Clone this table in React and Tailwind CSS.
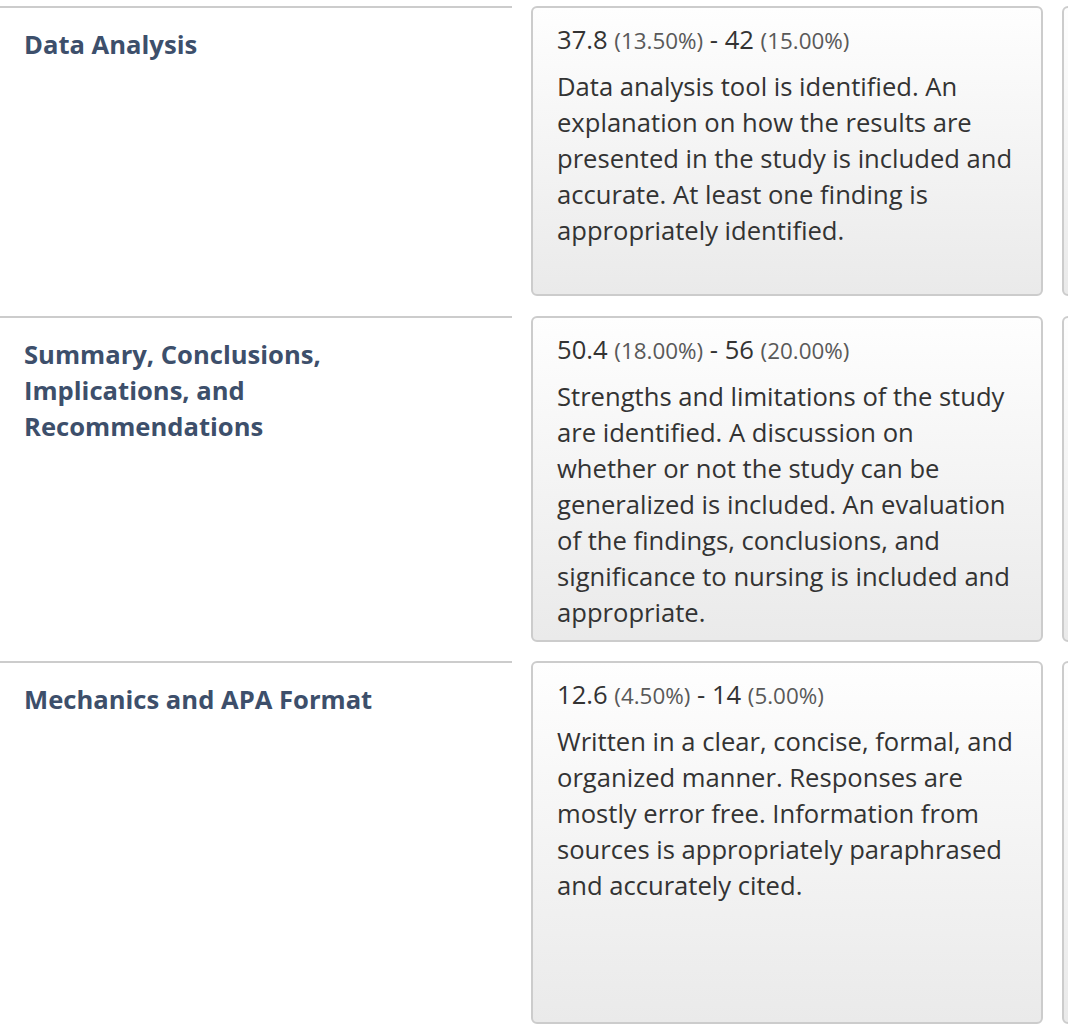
import React from 'react';

const rows = [
    {
        title: 'Data Analysis',
        min: '37.8', minPct: '13.50%', max: '42', maxPct: '15.00%',
        text: 'Data analysis tool is identified. An explanation on how the results are presented in the study is included and accurate. At least one finding is appropriately identified.',
        height: 'h-[290px]',
        gap: 'pb-[20px]',
    },
    {
        title: 'Summary, Conclusions, Implications, and Recommendations',
        min: '50.4', minPct: '18.00%', max: '56', maxPct: '20.00%',
        text: 'Strengths and limitations of the study are identified. A discussion on whether or not the study can be generalized is included. An evaluation of the findings, conclusions, and significance to nursing is included and appropriate.',
        height: 'h-[326px]',
        gap: 'pb-[19px]',
    },
    {
        title: 'Mechanics and APA Format',
        min: '12.6', minPct: '4.50%', max: '14', maxPct: '5.00%',
        text: 'Written in a clear, concise, formal, and organized manner. Responses are mostly error free. Information from sources is appropriately paraphrased and accurately cited.',
        height: 'h-[363px]',
        gap: 'pb-[8px]',
    },
];

function RatingCard({ row }) {
    return (
        <div className={`${row.height} w-[512px] shrink-0 rounded-[6px] border-2 border-[#cccccc] bg-gradient-to-b from-[#fefefe] to-[#eaeaea] pl-[24px] pr-[24px] pt-[16px]`}>
            <p className="text-[25.6px] leading-[32px] text-[#333333]">
                {row.min} <span className="text-[22.4px] text-[#595959]">({row.minPct})</span> - {row.max}{' '}
                <span className="text-[22.4px] text-[#595959]">({row.maxPct})</span>
            </p>
            <p className="mt-[12px] text-[25.6px] leading-[36px] text-[#333333]">{row.text}</p>
        </div>
    );
}

export default function App() {
    return (
        <div className="min-h-screen bg-white pt-[6px] font-['Open_Sans',sans-serif] overflow-hidden">
            {rows.map((row, idx) => (
                <div key={idx} className={`flex ${row.gap}`}>
                    {/* Criterion */}
                    <div className="w-[512px] shrink-0 border-t-2 border-[#cccccc] px-[24px] pt-[19px]">
                        <h3 className="max-w-[400px] text-[25.6px] font-bold leading-[36px] text-[#3d4f6b]">{row.title}</h3>
                    </div>
                    {/* Ratings */}
                    <div className="flex gap-[19px] pl-[19px]">
                        <RatingCard row={row} />
                        <div className={`${row.height} w-[512px] shrink-0 rounded-[6px] border-2 border-[#cccccc] bg-gradient-to-b from-[#fefefe] to-[#eaeaea]`} />
                    </div>
                </div>
            ))}
        </div>
    );
}
